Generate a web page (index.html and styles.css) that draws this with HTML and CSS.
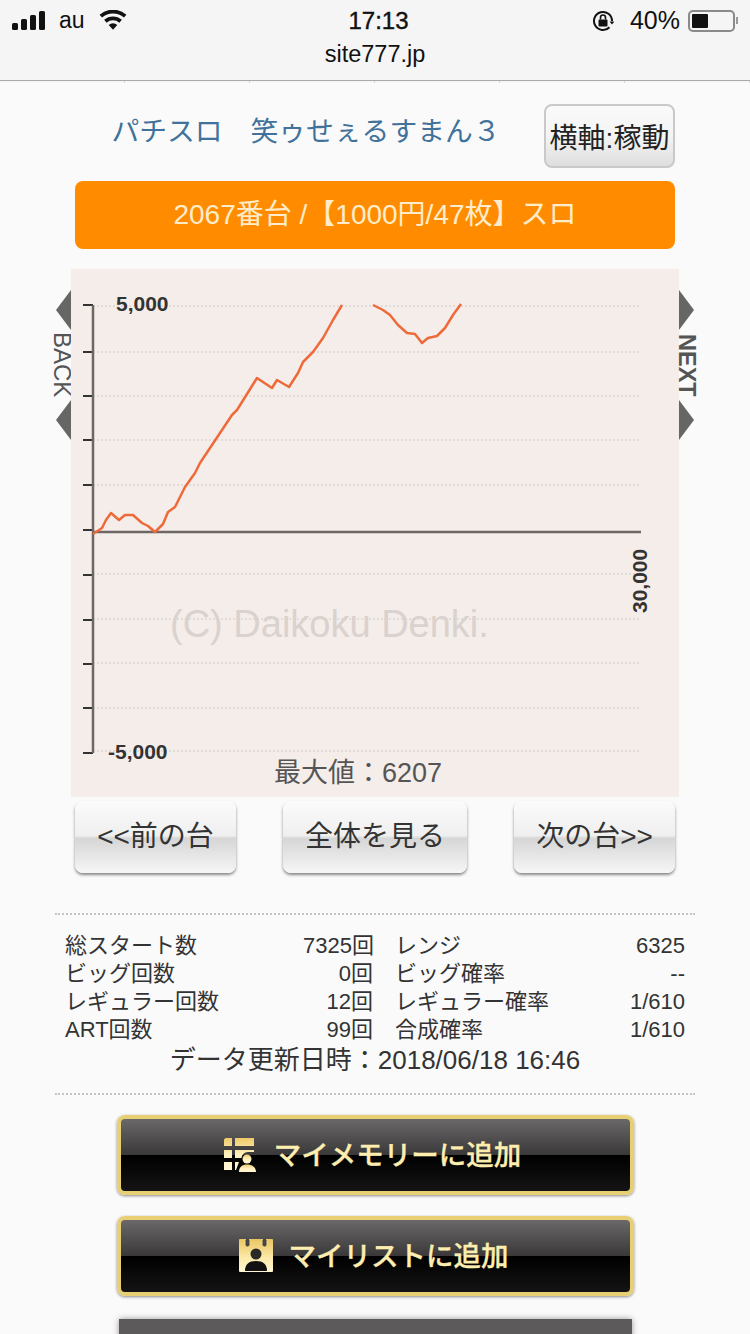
FILE: index.html
```html
<!DOCTYPE html>
<html lang="ja">
<head>
  <meta charset="UTF-8">
  <title>site777.jp</title>
  <link rel="stylesheet" href="styles.css">
</head>
<body>
  <!-- ステータスバー -->
  <header class="browser-bar">
    <div class="status-row">
      <div class="status-left">
        <svg class="signal" width="36" height="20" viewBox="0 0 36 20"><rect x="0" y="12" width="6" height="7" rx="1.5"/><rect x="9" y="8" width="6" height="11" rx="1.5"/><rect x="18" y="4" width="6" height="15" rx="1.5"/><rect x="27" y="0" width="6" height="19" rx="1.5"/></svg>
        <span class="carrier">au</span>
        <svg class="wifi" width="28" height="21" viewBox="0 0 30 22"><path d="M15 21l-4.600-5.200a6.800 6.800 0 0 1 9.200 0z"/><path d="M8.200 13.300l-2.700-3a14 14 0 0 1 19 0l-2.700 3a10 10 0 0 0-13.600 0z"/><path d="M3.300 7.900L.6 4.900a21.500 21.500 0 0 1 28.800 0l-2.700 3a17.500 17.500 0 0 0-23.400 0z"/></svg>
      </div>
      <div class="clock">17:13</div>
      <div class="status-right">
        <svg class="rotation" width="22" height="22" viewBox="0 0 22 22"><path d="M17.500 17.200A9 9 0 1 1 20 11" fill="none" stroke="#111" stroke-width="2"/><path d="M17.500 11.500h5l-2.500 3z" fill="#111"/><rect x="6.500" y="9.500" width="9" height="7" rx="1" fill="#111"/><path d="M8.500 9.500V7.500a2.500 2.500 0 0 1 5 0v2" fill="none" stroke="#111" stroke-width="1.600"/></svg>
        <span class="battery-pct">40%</span>
        <span class="battery"><span class="battery-level"></span></span>
        <span class="battery-cap"></span>
      </div>
    </div>
    <div class="url-row">site777.jp</div>
  </header>
  <div class="tab-line">
    <span></span><span></span><span></span><span></span><span></span><span></span>
  </div>

  <main class="page">
    <div class="title-row">
      <h1 class="title">パチスロ　笑ゥせぇるすまん３</h1>
      <button class="axis-btn" type="button">横軸:稼動</button>
    </div>
    <div class="machine-bar">2067番台 /【1000円/47枚】スロ</div>

    <section class="graph-wrap">
      <div class="side-nav">
        <span class="arrow arrow-left"></span>
        <span class="side-label label-back">BACK</span>
        <span class="arrow arrow-left"></span>
      </div>
      <svg class="graph" width="608" height="528" viewBox="71 269 608 528">
        <g class="grid">
          <line x1="93" y1="306" x2="641" y2="306"/>
          <line x1="93" y1="352" x2="641" y2="352"/>
          <line x1="93" y1="396" x2="641" y2="396"/>
          <line x1="93" y1="440" x2="641" y2="440"/>
          <line x1="93" y1="485" x2="641" y2="485"/>
          <line x1="93" y1="574" x2="641" y2="574"/>
          <line x1="93" y1="619" x2="641" y2="619"/>
          <line x1="93" y1="663" x2="641" y2="663"/>
          <line x1="93" y1="708" x2="641" y2="708"/>
          <line x1="93" y1="751" x2="641" y2="751"/>
        </g>
        <text class="watermark" x="170" y="637">(C) Daikoku Denki.</text>
        <g class="ticks">
          <line x1="83" y1="305" x2="93" y2="305"/>
          <line x1="83" y1="352" x2="93" y2="352"/>
          <line x1="83" y1="396" x2="93" y2="396"/>
          <line x1="83" y1="440" x2="93" y2="440"/>
          <line x1="83" y1="485" x2="93" y2="485"/>
          <line x1="83" y1="530" x2="93" y2="530"/>
          <line x1="83" y1="575" x2="93" y2="575"/>
          <line x1="83" y1="620" x2="93" y2="620"/>
          <line x1="83" y1="664" x2="93" y2="664"/>
          <line x1="83" y1="708" x2="93" y2="708"/>
          <line x1="83" y1="753" x2="93" y2="753"/>
        </g>
        <line class="axis" x1="93" y1="305" x2="93" y2="753"/>
        <line class="axis" x1="93" y1="532" x2="641" y2="532"/>
        <polyline class="plot" points="93,534 102,528 106,520 111,513 119,520 125,515 133,515 142,523 148,526 155,532 163,524 168,512 175,507 185,487 195,473 200,463 220,433 232,415 237,410 257,378 272,388 277,380 289,387 298,373 303,362 313,352 323,338 333,320 342,305"/>
        <polyline class="plot" points="373,305 383,310 390,315 398,325 407,333 415,334 422,343 428,338 437,336 445,328 453,315 461,304"/>
        <text class="graph-num" x="116" y="311">5,000</text>
        <text class="graph-num" x="108" y="759">-5,000</text>
        <text class="graph-num" transform="translate(647 613) rotate(-90)">30,000</text>
        <text class="graph-max" x="358" y="782">最大値：6207</text>
      </svg>
      <div class="side-nav">
        <span class="arrow arrow-right"></span>
        <span class="side-label label-next">NEXT</span>
        <span class="arrow arrow-right"></span>
      </div>
    </section>

    <nav class="graph-nav">
      <a class="nav-btn btn-prev">&lt;&lt;前の台</a>
      <a class="nav-btn btn-all">全体を見る</a>
      <a class="nav-btn btn-next">次の台&gt;&gt;</a>
    </nav>

    <section class="stats">
      <div class="stats-grid">
        <span>総スタート数</span><span class="val">7325回</span><span class="label-right">レンジ</span><span class="val">6325</span>
        <span>ビッグ回数</span><span class="val">0回</span><span class="label-right">ビッグ確率</span><span class="val">--</span>
        <span>レギュラー回数</span><span class="val">12回</span><span class="label-right">レギュラー確率</span><span class="val">1/610</span>
        <span>ART回数</span><span class="val">99回</span><span class="label-right">合成確率</span><span class="val">1/610</span>
      </div>
      <div class="updated">データ更新日時：2018/06/18 16:46</div>
    </section>

    <div class="gold-list">
      <a class="gold-btn btn-memory">
        <svg class="gold-icon" width="32" height="34" viewBox="0 0 32 34">
          <defs>
            <linearGradient id="gold-fill" x1="0" y1="0" x2="0" y2="1">
              <stop offset="0" stop-color="#eec968"/>
              <stop offset="0.5" stop-color="#fdf0bb"/>
              <stop offset="1" stop-color="#fff6d6"/>
            </linearGradient>
          </defs>
          <g fill="url(#gold-fill)">
            <path d="M1.500 0H8v8H0V1.500zM0 12h8v8H0zM0 24h8v8H0zM11 0h19v8H11zM11 12h19v2h-6a7 7 0 0 0-6.500 6H11zM11 24h4l-3 8h-1z"/>
            <circle cx="23" cy="21" r="4.500"/>
            <path d="M15 34c0-5 3-7.500 8-7.500s9 2.500 9 7.500z"/>
          </g>
        </svg>
        <span>マイメモリーに追加</span>
      </a>
      <a class="gold-btn btn-mylist">
        <svg class="gold-icon" width="34" height="34" viewBox="0 0 34 34">
          <defs>
            <linearGradient id="gold-fill-2" x1="0" y1="0" x2="0" y2="1">
              <stop offset="0" stop-color="#e9c55f"/>
              <stop offset="0.55" stop-color="#fbe9a6"/>
              <stop offset="1" stop-color="#fff6d6"/>
            </linearGradient>
          </defs>
          <rect width="34" height="33" rx="1" fill="url(#gold-fill-2)"/>
          <rect x="6" y="-1" width="5" height="9" rx="2.500" fill="#4a4540" stroke="#f3d98a" stroke-width="1"/>
          <rect x="23" y="-1" width="5" height="9" rx="2.500" fill="#4a4540" stroke="#f3d98a" stroke-width="1"/>
          <circle cx="17" cy="15" r="5.500" fill="#2b2926"/>
          <path d="M6 32c0-7 4-10 11-10s11 3 11 10z" fill="#111"/>
        </svg>
        <span>マイリストに追加</span>
      </a>
      <a class="gray-btn"></a>
    </div>
  </main>
</body>
</html>
```

FILE: styles.css
```css
* {
  box-sizing: border-box;
}
html, body {
  height: 1334px;
  overflow: hidden;
}
body {
  margin: 0;
  font-family: "Liberation Sans", "Noto Sans CJK JP", sans-serif;
  background: #fafafa;
  color: #333;
}

/* ブラウザのバー */
.browser-bar {
  height: 80px;
  background: #f5f5f5;
  color: #111;
}
.status-row {
  height: 41px;
  padding: 0 12px;
  display: grid;
  grid-template-columns: 1fr auto 1fr;
  align-items: center;
}
.status-left, .status-right {
  display: flex;
  align-items: center;
}
.status-right {
  justify-content: flex-end;
}
.signal {
  fill: #111;
}
.carrier {
  font-size: 23px;
  margin-left: 11px;
}
.wifi {
  fill: #111;
  margin-left: 14px;
}
.clock {
  margin-left: 7px;
  font-size: 24px;
  font-weight: 500;
  -webkit-text-stroke: 0.4px #111;
}
.battery-pct {
  font-size: 25px;
  margin: 0 8px 0 16px;
}
.battery {
  width: 47px;
  height: 22px;
  border: 2px solid #8a8a8a;
  border-radius: 5px;
  padding: 2px;
  display: block;
}
.battery-level {
  display: block;
  width: 16px;
  height: 100%;
  background: #111;
  border-radius: 1px;
}
.battery-cap {
  width: 2px;
  height: 7px;
  margin-left: 1px;
  background: #999;
}
.url-row {
  text-align: center;
  font-size: 23.5px;
  line-height: 26px;
}
.tab-line {
  height: 3px;
  border-top: 1px solid #a9a9a9;
  display: grid;
  grid-template-columns: repeat(6, 125px);
  background: #f7f7f7;
}
.tab-line span {
  border-right: 1px solid #d8d8d8;
}

.page {
  padding-top: 21px;
}

/* タイトル */
.title-row {
  height: 64px;
  padding: 0 75px;
  display: flex;
  justify-content: space-between;
  align-items: center;
}
.title {
  margin: 0 0 15px;
  flex: 1;
  text-align: center;
  font-size: 27.8px;
  font-weight: normal;
  color: #41729b;
  padding-right: 7px;
  white-space: nowrap;
}
.axis-btn {
  width: 131px;
  height: 64px;
  padding: 0;
  border: 2px solid #c9c9c9;
  border-radius: 8px;
  background: linear-gradient(#fafafa, #f4f4f4 50%, #dedede);
  font-family: inherit;
  font-size: 28px;
  color: #222;
  white-space: nowrap;
}
.machine-bar {
  margin: 13px 75px 20px;
  height: 68px;
  line-height: 68px;
  background: #ff8c00;
  border-radius: 8px;
  text-align: center;
  font-size: 28px;
  color: #ffeccb;
}

/* グラフ */
.graph-wrap {
  display: flex;
  justify-content: center;
  align-items: flex-start;
}
.graph {
  display: block;
  background: #f5ede9;
}
.grid line {
  stroke: #dcd6d2;
  stroke-width: 1.500;
  stroke-dasharray: 2 2;
}
.ticks line {
  stroke: #333;
  stroke-width: 2;
}
.axis {
  stroke: #6e6764;
  stroke-width: 2.500;
}
.plot {
  fill: none;
  stroke: #ee6a3a;
  stroke-width: 2.500;
  stroke-linejoin: round;
}
.watermark {
  font-size: 38px;
  fill: #d9d2ce;
  -webkit-text-stroke: 0.6px #d9d2ce;
}
.graph-num {
  font-size: 21px;
  font-weight: bold;
  fill: #333;
}
.graph-max {
  font-size: 27px;
  fill: #555;
  text-anchor: middle;
  -webkit-text-stroke: 0.4px #555;
}
.side-nav {
  width: 15px;
  height: 150px;
  margin-top: 21px;
  display: flex;
  flex-direction: column;
  align-items: center;
  justify-content: space-between;
}
.arrow {
  width: 0;
  height: 0;
  border-top: 20px solid transparent;
  border-bottom: 20px solid transparent;
}
.arrow-left {
  border-right: 15px solid #666;
}
.arrow-right {
  border-left: 15px solid #666;
}
.side-label {
  writing-mode: vertical-rl;
  line-height: 15px;
  color: #555;
}
.label-back {
  font-size: 24px;
  margin-left: -3px;
}
.label-next {
  font-size: 23.5px;
  font-weight: bold;
}

/* 前後ボタン */
.graph-nav {
  margin: 4px 75px 0;
  display: flex;
  justify-content: space-between;
}
.nav-btn {
  height: 72px;
  line-height: 72px;
  text-align: center;
  font-size: 28px;
  color: #333;
  border-radius: 8px;
  background: linear-gradient(#fbfbfb, #efefef 48%, #d6d6d6 52%, #f6f6f6);
  box-shadow: 0 2px 3px #888;
}
.btn-prev, .btn-next {
  width: 161px;
}
.btn-all {
  width: 184px;
}

/* データ */
.stats {
  margin: 40px 55px 0;
  padding: 17px 10px 19px;
  border-top: 2px dotted #c4c4c4;
  border-bottom: 2px dotted #c4c4c4;
  height: 182px;
}
.stats-grid {
  display: grid;
  grid-template-columns: 238px 70px 242px 70px;
  font-size: 22px;
  line-height: 28px;
  color: #333;
}
.label-right {
  margin-left: 22px;
  white-space: nowrap;
}
.val {
  text-align: right;
  white-space: nowrap;
}
.updated {
  text-align: center;
  font-size: 26px;
  line-height: 32px;
}

/* 金ボタン */
.gold-list {
  margin-top: 20px;
}
.gold-btn {
  margin: 0 116px 21px 117px;
  height: 80px;
  display: flex;
  align-items: center;
  justify-content: center;
  border: 4px solid #e9cf74;
  border-radius: 8px;
  background: linear-gradient(#6a6868, #3a3838 49.500%, #000 50%, #141414);
  box-shadow: 0 1px 3px #888;
  font-size: 27.5px;
  font-weight: 500;
  color: #fdeeb0;
  -webkit-text-stroke: 0.3px #fdeeb0;
}
.gold-btn span {
  margin-bottom: 5px;
}
.btn-memory {
  gap: 18px;
  padding-right: 6px;
}
.btn-mylist {
  gap: 16px;
  padding-right: 4px;
}
.gray-btn {
  display: block;
  margin: 23px 118px 0 119px;
  height: 60px;
  background: #5c5a5a;
  box-shadow: 0 0 6px #999;
}
```
